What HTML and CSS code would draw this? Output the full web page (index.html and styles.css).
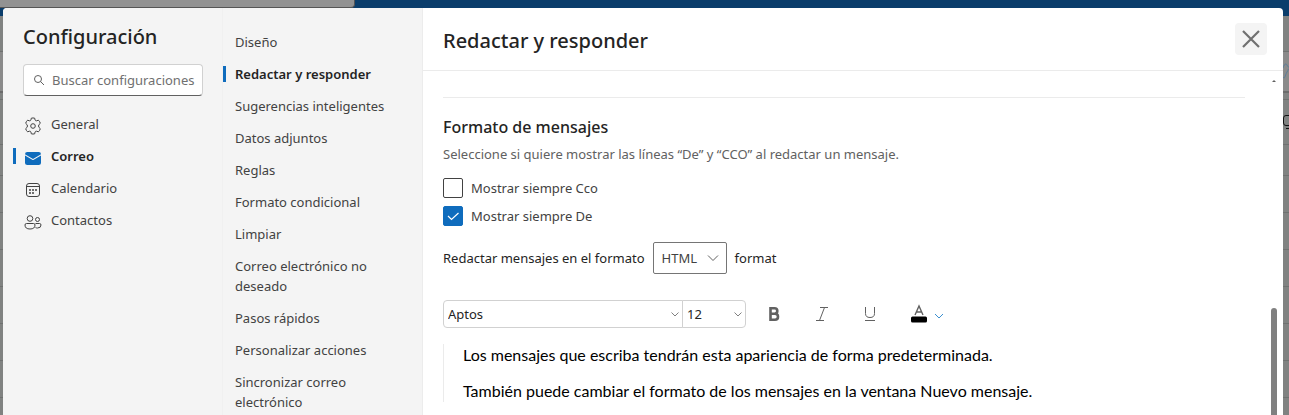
FILE: index.html
```html
<!DOCTYPE html>
<html lang="es">
    <head>
        <meta charset="utf-8">
        <title>Configuración</title>
        <link rel="stylesheet" href="styles.css">
    </head>
    <body>
        <!-- mailbox behind the dialog -->
        <div class="backdrop">
            <div class="topbar"><div class="topsearch"></div></div>
            <div class="row row-tabs"></div>
            <div class="row row-ribbon">
                <svg width="6" height="20" viewBox="0 0 6 20" fill="none" stroke="#5c7d99"><path d="M0 6C1 2 3 1 4 3S5 5 6 5M0 15c2 3 2-2 4-5s1-3 2-3"/></svg>
            </div>
            <div class="row row-gap"></div>
            <div class="row row-head">
                <svg width="6" height="16" viewBox="0 0 6 16" fill="none" stroke="#111"><path d="M6 1.5H3Q.5 1.5 .5 4V9Q.5 11.5 3 11.5H6M3 14.5H6"/></svg>
            </div>
            <div class="row row-filter"></div>
            <div class="row"></div>
            <div class="row"></div>
            <div class="row"></div>
            <div class="row"></div>
            <div class="row"></div>
            <div class="row"></div>
            <div class="row"></div>
        </div>

        <main class="dialog" role="dialog" aria-label="Configuración">
            <nav class="categories">
                <h1>Configuración</h1>
                <label class="search">
                    <svg width="12" height="12" viewBox="0 0 12 12" fill="none" stroke="#616161"><circle cx="5" cy="5" r="3.5"/><path d="M7.5 7.5L11 11"/></svg>
                    <input type="text" placeholder="Buscar configuraciones" aria-label="Buscar configuraciones">
                </label>
                <ul>
                    <li><a href="#general">
                        <svg width="20" height="20" viewBox="0 0 20 20" fill="none" stroke="#424242"><circle cx="10" cy="10" r="2.3"/><path stroke-linejoin="round" d="M8.3 2.2Q10 1.7 11.7 2.2L12.1 4.1Q12.6 5 13.6 4.8L15.4 4.2Q16.9 5.5 17.3 7.3L15.9 8.7Q15.2 10 15.9 11.3L17.3 12.7Q16.9 14.5 15.4 15.8L13.6 15.2Q12.6 15 12.1 15.9L11.7 17.8Q10 18.3 8.3 17.8L7.9 15.9Q7.4 15 6.4 15.2L4.6 15.8Q3.1 14.5 2.7 12.7L4.1 11.3Q4.8 10 4.1 8.7L2.7 7.3Q3.1 5.5 4.6 4.2L6.4 4.8Q7.4 5 7.9 4.1Z"/></svg>
                        General</a></li>
                    <li class="selected"><a href="#correo" aria-current="page">
                        <svg width="20" height="20" viewBox="0 0 20 20" fill="#0f6cbd"><path d="M2 6.3Q2 4 4.3 4H15.7Q18 4 18 6.3L10 11Z"/><path d="M2 7.5L9.7 12Q10 12.2 10.3 12L18 7.5V14.5Q18 17 15.5 17H4.5Q2 17 2 14.5Z"/></svg>
                        Correo</a></li>
                    <li><a href="#calendario">
                        <svg width="20" height="20" viewBox="0 0 20 20" fill="none" stroke="#424242"><rect x="3.5" y="3.5" width="13" height="13" rx="2.5"/><path d="M3.5 6.5h13"/><g fill="#424242" stroke="none"><circle cx="7" cy="10" r="1"/><circle cx="10" cy="10" r="1"/><circle cx="13" cy="10" r="1"/><circle cx="7" cy="13" r="1"/><circle cx="10" cy="13" r="1"/></g></svg>
                        Calendario</a></li>
                    <li><a href="#contactos">
                        <svg width="20" height="20" viewBox="0 0 20 20" fill="none" stroke="#424242"><circle cx="7" cy="6.5" r="2.8"/><circle cx="14.5" cy="7.5" r="2"/><path d="M3.5 11.5H10.5Q12 11.5 12 13Q12 17 7 17T2 13Q2 11.5 3.5 11.5ZM12.5 11.5H16.5Q18 11.5 18 13Q18 16 14.5 16Q13.3 16 12.5 15.6"/></svg>
                        Contactos</a></li>
                </ul>
            </nav>

            <nav class="sections">
                <ul>
                    <li><a href="#diseno">Diseño</a></li>
                    <li class="selected"><a href="#redactar" aria-current="page">Redactar y responder</a></li>
                    <li><a href="#sugerencias">Sugerencias inteligentes</a></li>
                    <li><a href="#adjuntos">Datos adjuntos</a></li>
                    <li><a href="#reglas">Reglas</a></li>
                    <li><a href="#condicional">Formato condicional</a></li>
                    <li><a href="#limpiar">Limpiar</a></li>
                    <li><a href="#no-deseado">Correo electrónico no deseado</a></li>
                    <li><a href="#pasos">Pasos rápidos</a></li>
                    <li><a href="#acciones">Personalizar acciones</a></li>
                    <li><a href="#sincronizar">Sincronizar correo electrónico</a></li>
                </ul>
            </nav>

            <section class="panel">
                <header>
                    <h2>Redactar y responder</h2>
                    <button type="button" class="close" aria-label="Cerrar">
                        <svg width="18" height="18" viewBox="0 0 18 18" fill="none" stroke="#707070" stroke-width="2.2"><path d="M1 1L17 17M17 1L1 17"/></svg>
                    </button>
                </header>
                <div class="panel-body">
                    <div class="content">
                        <h3>Formato de mensajes</h3>
                        <p class="hint">Seleccione si quiere mostrar las líneas “De” y “CCO” al redactar un mensaje.</p>
                        <label class="check"><input type="checkbox">Mostrar siempre Cco</label>
                        <label class="check"><input type="checkbox" checked>Mostrar siempre De</label>
                        <div class="format">
                            <label for="format">Redactar mensajes en el formato</label>
                            <span class="select select-format">
                                <select id="format"><option>HTML</option></select>
                                <svg width="12" height="12" viewBox="0 0 12 12" fill="none" stroke="#616161"><path d="M1 3.5L6 8.5L11 3.5"/></svg>
                            </span>
                            <span>format</span>
                        </div>
                        <div class="toolbar">
                            <span class="select select-font">
                                <select aria-label="Fuente"><option>Aptos</option></select>
                                <svg width="8" height="8" viewBox="0 0 8 8" fill="none" stroke="#808080"><path d="M.5 2.5L4 6L7.5 2.5"/></svg>
                            </span>
                            <span class="select select-size">
                                <select aria-label="Tamaño de fuente"><option>12</option></select>
                                <svg width="8" height="8" viewBox="0 0 8 8" fill="none" stroke="#808080"><path d="M.5 2.5L4 6L7.5 2.5"/></svg>
                            </span>
                            <div class="tools">
                                <button type="button" aria-label="Negrita"><svg width="20" height="20" viewBox="0 0 20 20" fill="none" stroke="#616161" stroke-width="2.6"><path d="M6.5 4.3H10.5Q13.3 4.3 13.3 7T10.5 9.7H6.5ZM6.5 9.7H11Q14 9.7 14 12.7T11 15.7H6.5Z"/></svg></button>
                                <button type="button" aria-label="Cursiva"><svg width="20" height="20" viewBox="0 0 20 20" fill="none" stroke="#616161"><path d="M8 3.5H16M4 16.5H12M12.5 3.5L7.5 16.5"/></svg></button>
                                <button type="button" aria-label="Subrayado"><svg width="20" height="20" viewBox="0 0 20 20" fill="none" stroke="#616161"><path d="M5.5 3V9.5Q5.5 13.5 10 13.5T14.5 9.5V3M5 16.5H15"/></svg></button>
                                <button type="button" class="color" aria-label="Color de fuente">
                                    <svg width="20" height="20" viewBox="0 0 20 20" fill="none" stroke="#616161" stroke-width="1.4"><path d="M7 11L11 2L15 11M8.5 8H13.5"/><rect x="3" y="12.5" width="16" height="6" rx="1.5" fill="#000" stroke="none"/></svg>
                                    <svg width="10" height="10" viewBox="0 0 10 10" fill="none" stroke="#3a8fd0"><path d="M1 5L5 9L9 5"/></svg>
                                </button>
                            </div>
                        </div>
                        <div class="preview">
                            <p>Los mensajes que escriba tendrán esta apariencia de forma predeterminada.</p>
                            <p>También puede cambiar el formato de los mensajes en la ventana Nuevo mensaje.</p>
                        </div>
                    </div>
                    <div class="scrollbar">
                        <div class="scroll-arrow"></div>
                        <div class="thumb"></div>
                    </div>
                </div>
            </section>
        </main>
    </body>
</html>
```
FILE: styles.css
```css
:root {
    --brand: #0f6cbd;
    --text: #242424;
    --text-soft: #424242;
    --text-hint: #616161;
    --side: #f4f4f4;
    --line: #ebebeb;
}

* {
    box-sizing: border-box;
}

body {
    margin: 0;
    height: 100vh;
    overflow: hidden;
    font-family: "Noto Sans", "Open Sans", sans-serif;
    font-size: 13px;
    line-height: 20px;
    color: var(--text);
}

ul {
    list-style: none;
    margin: 0;
    padding: 0;
}

h1, h2, h3, p {
    margin: 0;
}

button {
    border: none;
    background: none;
    padding: 0;
    display: flex;
    align-items: center;
    justify-content: center;
}

svg {
    flex: none;
}

.backdrop {
    position: fixed;
    inset: 0;
    background: #808281;
}

.topbar {
    height: 16px;
    background: #0a3d6b;
}

.topsearch {
    width: 355px;
    height: 8px;
    background: #929292;
    border-bottom: 1px solid #555;
    border-right: 1px solid #555;
    border-radius: 0 0 4px 0;
}

.row {
    height: 37px;
    border-bottom: 1px solid #6f7170;
    display: flex;
    justify-content: flex-end;
    align-items: center;
}

.row-tabs {
    height: 36px;
}

.row-ribbon {
    height: 41px;
    background: #8a8a8a;
    border-bottom: 2px solid #6b6b6b;
}

.row-gap {
    height: 7px;
}

.row-head {
    height: 45px;
}

.row-filter {
    height: 31px;
}

.dialog {
    position: fixed;
    inset: 8px 6px 0 3px;
    display: flex;
    background: white;
    border-radius: 4px 4px 0 0;
    overflow: hidden;
}

.categories {
    width: 220px;
    flex: none;
    background: var(--side);
    border-right: 1px solid #f0f0f0;
    padding: 15px 19px 0 20px;
}

h1, h2 {
    font-size: 20px;
    line-height: 28px;
    font-weight: 500;
}

.search {
    display: flex;
    align-items: center;
    gap: 7px;
    height: 32px;
    margin: 13px 0 12px;
    padding: 0 4px 0 9px;
    background: white;
    border: 1px solid #d1d1d1;
    border-bottom-color: #616161;
    border-radius: 4px;
}

.search input {
    flex: 1;
    min-width: 0;
    border: none;
    padding: 0;
    font: inherit;
    background: none;
    outline: none;
}

.search input::placeholder {
    color: #707070;
}

.categories a, .sections a {
    display: flex;
    color: var(--text-soft);
    text-decoration: none;
}

.categories li {
    margin-left: -10px;
    border-left: 3px solid transparent;
    height: 16px;
    margin-bottom: 16px;
    display: flex;
    align-items: center;
}

.categories ul {
    padding-top: 8px;
}

.categories a {
    height: 20px;
    gap: 8px;
    padding-left: 7px;
}

.categories a svg {
    margin-top: 2px;
}

.categories .selected a, .sections .selected a {
    color: var(--text);
    font-weight: 600;
}

.categories .selected {
    border-left-color: var(--brand);
}

.sections {
    width: 200px;
    flex: none;
    background: var(--side);
    border-right: 1px solid #ececec;
    padding-top: 18px;
}

.sections li {
    padding: 6px 24px 6px 0;
}

.sections a {
    padding: 0 0 0 12px;
}

.sections .selected a {
    background: linear-gradient(var(--brand), var(--brand)) 0 50% / 3px 16px no-repeat;
}

.panel {
    flex: 1;
    min-width: 0;
    display: flex;
    flex-direction: column;
}

.panel header {
    display: flex;
    align-items: center;
    justify-content: space-between;
    height: 63px;
    flex: none;
    border-bottom: 1px solid var(--line);
    padding: 0 16px 0 20px;
}

.panel h2 {
    padding-top: 4px;
}

.close {
    width: 32px;
    height: 32px;
    background: #f4f4f4;
    border-radius: 4px;
}

.panel-body {
    flex: 1;
    min-height: 0;
    display: flex;
    justify-content: space-between;
}

.content {
    flex: 1;
    margin: 26px 26px 0 20px;
    border-top: 1px solid var(--line);
    padding-top: 18px;
}

h3 {
    font-size: 16px;
    line-height: 22px;
    font-weight: 500;
}

.hint {
    color: var(--text-hint);
    margin: 6px 0 14px;
}

.check {
    display: flex;
    align-items: center;
    gap: 8px;
    width: max-content;
    margin-bottom: 8px;
    color: var(--text-soft);
}

.check input {
    appearance: none;
    width: 20px;
    height: 20px;
    margin: 0;
    border: 1px solid var(--text-soft);
    border-radius: 2px;
}

.check input:checked {
    border-color: var(--brand);
    background: var(--brand) url("data:image/svg+xml,%3Csvg xmlns='http://www.w3.org/2000/svg' viewBox='0 0 18 18' fill='none' stroke='white' stroke-width='1.2'%3E%3Cpath d='M4 9l3.5 3.5L14.5 6'/%3E%3C/svg%3E") center / 18px no-repeat;
}

.format {
    display: flex;
    align-items: center;
    gap: 8px;
    margin-top: 16px;
}

/* native select with our own chevron on top */
.select {
    display: grid;
    align-items: center;
}

.select select, .select svg {
    grid-area: 1 / 1;
}

.select svg {
    justify-self: end;
    margin-right: 4px;
    pointer-events: none;
}

.select select {
    appearance: none;
    width: 100%;
    height: 28px;
    border: 1px solid #d1d1d1;
    padding: 0 4px;
    background: white;
    color: var(--text);
    font: inherit;
}

.select-format {
    width: 74px;
}

.select-format select {
    height: 32px;
    padding: 0 8px;
    border-color: #757575;
    border-radius: 2px;
    color: var(--text-soft);
}

.select-format svg {
    margin-right: 8px;
}

.toolbar {
    display: flex;
    align-items: center;
    margin-top: 26px;
}

.select-font {
    width: 240px;
}

.select-font select {
    border-radius: 4px 0 0 4px;
}

.select-size {
    width: 64px;
    margin-left: -1px;
}

.select-size select {
    border-radius: 0 4px 4px 0;
}

.tools {
    display: flex;
    gap: 28px;
    margin-left: 18px;
}

.color {
    gap: 6px;
}

.preview {
    margin-top: 16px;
    border-left: 1px solid var(--line);
    padding: 1px 0 1px 19px;
    font-family: Lato, "Liberation Sans", sans-serif;
    font-size: 16px;
    color: black;
}

.preview p + p {
    margin-top: 16px;
}

.scrollbar {
    width: 6px;
    margin-right: 6px;
    display: flex;
    flex-direction: column;
    align-items: center;
}

.scroll-arrow {
    margin-top: 9px;
    border: 2px solid transparent;
    border-top: 0;
    border-bottom-color: #606060;
}

.thumb {
    width: 6px;
    flex: 1;
    margin-top: 226px;
    background: #808080;
    border-radius: 3px 3px 0 0;
}
```
